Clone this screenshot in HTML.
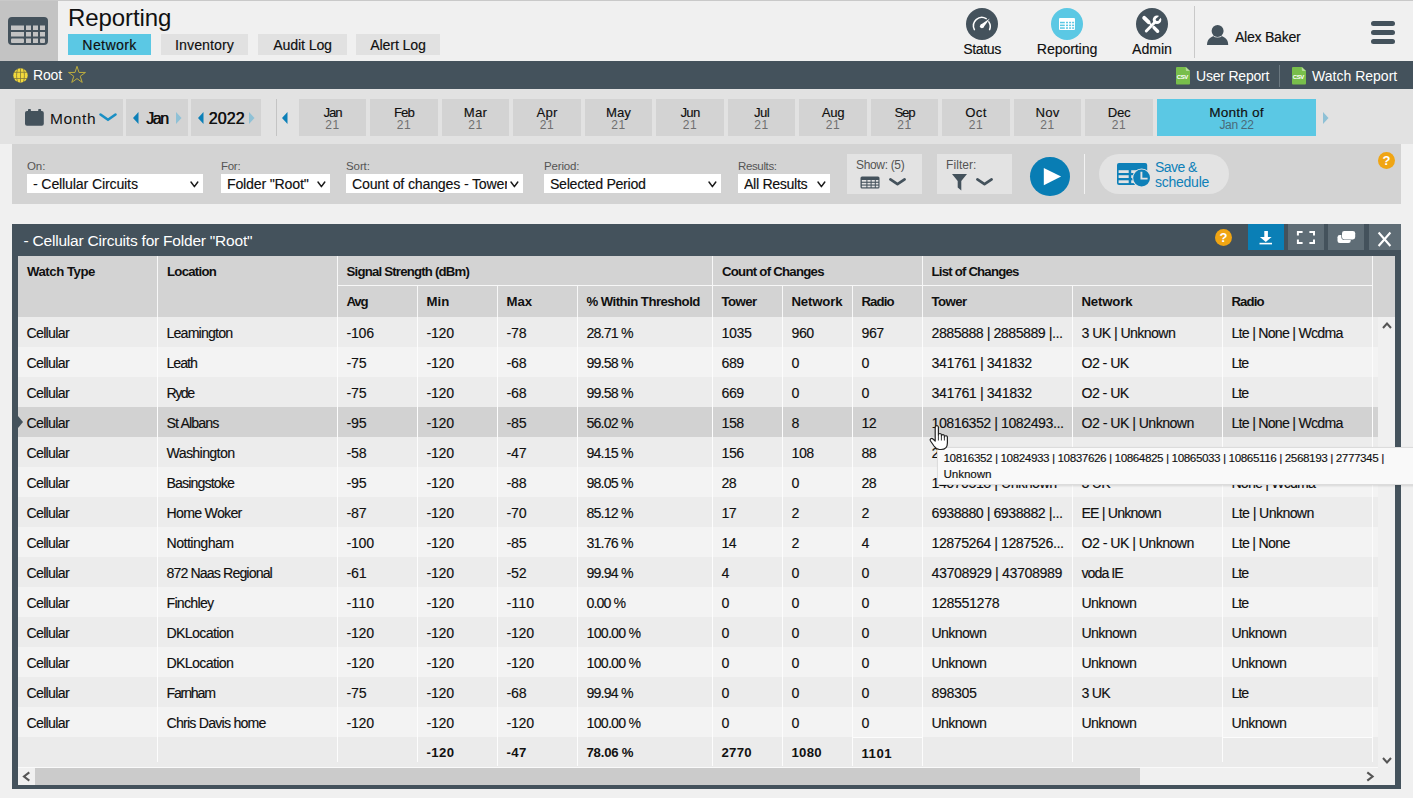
<!DOCTYPE html>
<html><head><meta charset="utf-8"><title>Reporting</title>
<style>
html,body{margin:0;padding:0}
body{width:1413px;height:798px;overflow:hidden;position:relative;background:#f0f0f0;font-family:"Liberation Sans",sans-serif}
.b{position:absolute;box-sizing:border-box}
.t{position:absolute;white-space:nowrap}
svg.b{overflow:visible}
</style></head><body>
<div class="b" style="left:0px;top:0px;width:1413px;height:61px;background:#f0f0f0;"></div>
<div class="b" style="left:0px;top:0px;width:1413px;height:1px;background:#c9c9c9;"></div>
<div class="b" style="left:0px;top:1px;width:58px;height:60px;background:#c3c3c3;"></div>
<svg class="b" style="left:8px;top:17px" width="40" height="28" viewBox="0 0 40 28">
<rect x="0" y="0" width="40" height="28" rx="4" fill="#44525c"/>
<g fill="#c3c3c3">
<rect x="3" y="8.5" width="13" height="4.5"/><rect x="18" y="8.5" width="5" height="4.5"/><rect x="25" y="8.5" width="5" height="4.5"/><rect x="32" y="8.5" width="5" height="4.5"/>
<rect x="3" y="15" width="13" height="4.5"/><rect x="18" y="15" width="5" height="4.5"/><rect x="25" y="15" width="5" height="4.5"/><rect x="32" y="15" width="5" height="4.5"/>
<rect x="3" y="21.5" width="13" height="4.5" rx="1"/><rect x="18" y="21.5" width="5" height="4.5"/><rect x="25" y="21.5" width="5" height="4.5"/><rect x="32" y="21.5" width="5" height="4.5" rx="1"/>
</g></svg>
<div class="t" style="left:68px;top:5.68px;font-size:24px;line-height:24px;color:#111;letter-spacing:-0.085px;">Reporting</div>
<div class="b" style="left:68px;top:34px;width:83px;height:21px;background:#5bc8e4;"></div>
<div class="t" style="left:68px;top:37.65px;font-size:14px;line-height:14px;color:#111;text-shadow:0.5px 0 0 rgba(0,0,0,0.3);letter-spacing:0.422px;width:83px;text-align:center;">Network</div>
<div class="b" style="left:161px;top:34px;width:87px;height:21px;background:#e1e1e1;"></div>
<div class="t" style="left:161px;top:37.65px;font-size:14px;line-height:14px;color:#111;text-shadow:0.5px 0 0 rgba(0,0,0,0.3);letter-spacing:0.158px;width:87px;text-align:center;">Inventory</div>
<div class="b" style="left:258px;top:34px;width:89px;height:21px;background:#e1e1e1;"></div>
<div class="t" style="left:258px;top:37.65px;font-size:14px;line-height:14px;color:#111;text-shadow:0.5px 0 0 rgba(0,0,0,0.3);letter-spacing:-0.047px;width:89px;text-align:center;">Audit Log</div>
<div class="b" style="left:356px;top:34px;width:84px;height:21px;background:#e1e1e1;"></div>
<div class="t" style="left:356px;top:37.65px;font-size:14px;line-height:14px;color:#111;text-shadow:0.5px 0 0 rgba(0,0,0,0.3);letter-spacing:-0.043px;width:84px;text-align:center;">Alert Log</div>
<div class="b" style="left:966px;top:8px;width:32px;height:32px;border-radius:50%;background:#44525c"></div>
<div class="t" style="left:942px;top:42.15px;font-size:14px;line-height:14px;color:#111;text-shadow:0.5px 0 0 rgba(0,0,0,0.3);letter-spacing:-0.328px;width:80px;text-align:center;">Status</div>
<div class="b" style="left:1051px;top:8px;width:32px;height:32px;border-radius:50%;background:#5bc8e4"></div>
<div class="t" style="left:1027px;top:42.15px;font-size:14px;line-height:14px;color:#111;text-shadow:0.5px 0 0 rgba(0,0,0,0.3);letter-spacing:-0.05px;width:80px;text-align:center;">Reporting</div>
<div class="b" style="left:1136px;top:8px;width:32px;height:32px;border-radius:50%;background:#44525c"></div>
<div class="t" style="left:1112px;top:42.15px;font-size:14px;line-height:14px;color:#111;text-shadow:0.5px 0 0 rgba(0,0,0,0.3);letter-spacing:0.045px;width:80px;text-align:center;">Admin</div>
<svg class="b" style="left:966px;top:8px" width="32" height="32" viewBox="0 0 32 32">
<path d="M8.4 21.6 A8.4 8.4 0 0 1 20.2 10.6" fill="none" stroke="#fff" stroke-width="1.5" stroke-linecap="round"/>
<path d="M22.8 13.8 A8.4 8.4 0 0 1 23.6 21.6" fill="none" stroke="#fff" stroke-width="1.5" stroke-linecap="round"/>
<path d="M14.6 16.8 L23.8 10.4 L17.4 19.6 Z" fill="#fff"/><circle cx="15.9" cy="18.2" r="1.95" fill="#fff"/>
</svg>
<svg class="b" style="left:1051px;top:8px" width="32" height="32" viewBox="0 0 32 32">
<rect x="8" y="10" width="16" height="12" rx="1" fill="#fff"/>
<g fill="#5bc8e4"><rect x="9" y="13.8" width="4.8" height="1.5"/><rect x="15" y="13.8" width="2" height="1.5"/><rect x="18.1" y="13.8" width="2" height="1.5"/><rect x="21.1" y="13.8" width="2" height="1.5"/><rect x="9" y="16.6" width="4.8" height="1.5"/><rect x="15" y="16.6" width="2" height="1.5"/><rect x="18.1" y="16.6" width="2" height="1.5"/><rect x="21.1" y="16.6" width="2" height="1.5"/><rect x="9" y="19.3" width="4.8" height="1.5"/><rect x="15" y="19.3" width="2" height="1.5"/><rect x="18.1" y="19.3" width="2" height="1.5"/><rect x="21.1" y="19.3" width="2" height="1.5"/></g>
</svg>
<svg class="b" style="left:1136px;top:8px" width="32" height="32" viewBox="0 0 32 32">
<g stroke="#fff" stroke-linecap="round">
<line x1="8.2" y1="9.8" x2="12.6" y2="14.2" stroke-width="3.9"/>
<line x1="12.6" y1="14.2" x2="15.5" y2="17.1" stroke-width="1.6"/>
<line x1="18" y1="19.6" x2="21.6" y2="23.2" stroke-width="3.4"/>
<line x1="10.3" y1="23" x2="18.6" y2="14.6" stroke-width="2.9"/>
</g>
<circle cx="21" cy="11.8" r="4.3" fill="#fff"/>
<circle cx="21.3" cy="11.5" r="1.6" fill="#44525c"/>
<rect x="-1.3" y="-6.5" width="2.6" height="6.5" transform="translate(21.3,11.5) rotate(45)" fill="#44525c"/>
<line x1="10.3" y1="23" x2="18.6" y2="14.6" stroke="#44525c" stroke-width="0.9" opacity="0"/>
</svg>
<div class="b" style="left:1194px;top:6px;width:1px;height:52px;background:#c9c9c9;"></div>
<svg class="b" style="left:1207px;top:25px" width="22" height="21" viewBox="0 0 22 21">
<path d="M0 19.9 C0 14 4.5 10.6 10.6 10.6 C16.7 10.6 21.2 14 21.2 19.9 Z" fill="#44525c"/>
<circle cx="10.6" cy="5.9" r="6.7" fill="#f0f0f0"/>
<circle cx="10.6" cy="5.9" r="6" fill="#44525c"/>
</svg>
<div class="t" style="left:1235px;top:30.15px;font-size:14px;line-height:14px;color:#111;text-shadow:0.5px 0 0 rgba(0,0,0,0.3);letter-spacing:-0.225px;">Alex Baker</div>
<div class="b" style="left:1371px;top:21px;width:24px;height:5px;border-radius:2.5px;background:#44525c"></div>
<div class="b" style="left:1371px;top:30px;width:24px;height:5px;border-radius:2.5px;background:#44525c"></div>
<div class="b" style="left:1371px;top:39px;width:24px;height:5px;border-radius:2.5px;background:#44525c"></div>
<div class="b" style="left:0px;top:61px;width:1413px;height:28px;background:#44525c;"></div>
<svg class="b" style="left:13px;top:67.6px" width="15" height="15" viewBox="0 0 15 15">
<circle cx="7.5" cy="7.5" r="7.2" fill="#f2d93c"/>
<g stroke="#6f6a3a" stroke-width="0.8" fill="none" opacity="0.85">
<path d="M4.6 1 C3.2 4.5 3.2 10.5 4.6 14"/><path d="M10.4 1 C11.8 4.5 11.8 10.5 10.4 14"/><line x1="7.5" y1="0.3" x2="7.5" y2="14.7"/>
<line x1="0.5" y1="4.3" x2="14.5" y2="4.3"/><line x1="0.5" y1="10.5" x2="14.5" y2="10.5"/>
</g></svg>
<div class="t" style="left:33px;top:67.65px;font-size:14px;line-height:14px;color:#fff;letter-spacing:-0.164px;">Root</div>
<svg class="b" style="left:67px;top:65.6px" width="20" height="19" viewBox="0 0 20 19">
<path d="M10.00 0.30 L12.00 6.45 L18.46 6.45 L13.23 10.25 L15.23 16.40 L10.00 12.60 L4.77 16.40 L6.77 10.25 L1.54 6.45 L8.00 6.45 Z" fill="none" stroke="#bfae3e" stroke-width="1" stroke-linejoin="miter"/>
</svg>
<svg class="b" style="left:1176px;top:66.7px" width="14" height="17.5" viewBox="0 0 14 17.5">
<path d="M1 0 H9.8 L14 4 V16.5 a1 1 0 0 1 -1 1 H1 a1 1 0 0 1 -1 -1 V1 a1 1 0 0 1 1 -1 Z" fill="#78be4b"/>
<path d="M9.8 0 L14 4 H11 a1.2 1.2 0 0 1 -1.2 -1.2 Z" fill="#b5dc98"/>
<text x="6.3" y="12.4" font-size="6" font-family="Liberation Sans" font-weight="700" fill="#fff" text-anchor="middle" letter-spacing="-0.4">CSV</text>
</svg>
<div class="t" style="left:1196px;top:69.15px;font-size:14px;line-height:14px;color:#fff;letter-spacing:-0.209px;">User Report</div>
<div class="b" style="left:1279px;top:65px;width:1px;height:22px;background:#6b7880;"></div>
<svg class="b" style="left:1292px;top:66.7px" width="14" height="17.5" viewBox="0 0 14 17.5">
<path d="M1 0 H9.8 L14 4 V16.5 a1 1 0 0 1 -1 1 H1 a1 1 0 0 1 -1 -1 V1 a1 1 0 0 1 1 -1 Z" fill="#78be4b"/>
<path d="M9.8 0 L14 4 H11 a1.2 1.2 0 0 1 -1.2 -1.2 Z" fill="#b5dc98"/>
<text x="6.3" y="12.4" font-size="6" font-family="Liberation Sans" font-weight="700" fill="#fff" text-anchor="middle" letter-spacing="-0.4">CSV</text>
</svg>
<div class="t" style="left:1312px;top:69.15px;font-size:14px;line-height:14px;color:#fff;letter-spacing:0.014px;">Watch Report</div>
<div class="b" style="left:0px;top:89px;width:1413px;height:55px;background:#e2e2e2;"></div>
<div class="b" style="left:15px;top:99px;width:108px;height:37px;background:#d3d3d3;"></div>
<svg class="b" style="left:25px;top:108.9px" width="20" height="18" viewBox="0 0 20 18">
<rect x="0" y="2.1" width="18.8" height="14.7" rx="2" fill="#44525c"/>
<rect x="3" y="0" width="2.9" height="4" rx="0.8" fill="#44525c"/><rect x="13.2" y="0" width="2.9" height="4" rx="0.8" fill="#44525c"/>
</svg>
<div class="t" style="left:50px;top:111.38px;font-size:15.5px;line-height:15.5px;color:#111;letter-spacing:0.657px;">Month</div>
<svg class="b" style="left:99px;top:113px" width="18" height="9" viewBox="0 0 18 9">
<path d="M1.5 1.5 L9 6.8 L16.5 1.5" fill="none" stroke="#1a8fc4" stroke-width="2.6" stroke-linecap="round" stroke-linejoin="round"/>
</svg>
<div class="b" style="left:126px;top:99px;width:62px;height:37px;background:#d3d3d3;"></div>
<svg class="b" style="left:132.7px;top:112.2px" width="6" height="12" viewBox="0 0 6 12"><path d="M5.5 0 L0 6 L5.5 12 Z" fill="#0c80b8"/></svg>
<div class="t" style="left:146px;top:110.96px;font-size:16px;line-height:16px;color:#111;letter-spacing:-1.413px;text-shadow:0.45px 0 0 #111;">Jan</div>
<svg class="b" style="left:176px;top:112.2px" width="6" height="12" viewBox="0 0 6 12"><path d="M0 0 L5.5 6 L0 12 Z" fill="#8fc1d6"/></svg>
<div class="b" style="left:191px;top:99px;width:70px;height:37px;background:#d3d3d3;"></div>
<svg class="b" style="left:197.8px;top:112.2px" width="6" height="12" viewBox="0 0 6 12"><path d="M5.5 0 L0 6 L5.5 12 Z" fill="#0c80b8"/></svg>
<div class="t" style="left:208.5px;top:110.96px;font-size:16px;line-height:16px;color:#111;letter-spacing:0.116px;text-shadow:0.5px 0 0 #111;">2022</div>
<svg class="b" style="left:248.8px;top:112.2px" width="6" height="12" viewBox="0 0 6 12"><path d="M0 0 L5.5 6 L0 12 Z" fill="#8fc1d6"/></svg>
<div class="b" style="left:276px;top:99px;width:1px;height:37px;background:#c4c4c4;"></div>
<svg class="b" style="left:282px;top:112px" width="6" height="12" viewBox="0 0 6 12"><path d="M5.5 0 L0 6 L5.5 12 Z" fill="#0c80b8"/></svg>
<div class="b" style="left:299px;top:99px;width:67px;height:37px;background:#d3d3d3;"></div>
<div class="t" style="left:299px;top:106.00px;font-size:13px;line-height:13px;color:#111;text-shadow:0.5px 0 0 rgba(0,0,0,0.3);letter-spacing:-1.003px;width:67px;text-align:center;">Jan</div>
<div class="t" style="left:299px;top:118.84px;font-size:12px;line-height:12px;color:#6f6f6f;letter-spacing:0.56px;width:67px;text-align:center;">21</div>
<div class="b" style="left:370px;top:99px;width:68px;height:37px;background:#d3d3d3;"></div>
<div class="t" style="left:370px;top:106.00px;font-size:13px;line-height:13px;color:#111;text-shadow:0.5px 0 0 rgba(0,0,0,0.3);letter-spacing:-0.738px;width:68px;text-align:center;">Feb</div>
<div class="t" style="left:370px;top:118.84px;font-size:12px;line-height:12px;color:#6f6f6f;letter-spacing:0.56px;width:68px;text-align:center;">21</div>
<div class="b" style="left:442px;top:99px;width:67px;height:37px;background:#d3d3d3;"></div>
<div class="t" style="left:442px;top:106.00px;font-size:13px;line-height:13px;color:#111;text-shadow:0.5px 0 0 rgba(0,0,0,0.3);letter-spacing:0.354px;width:67px;text-align:center;">Mar</div>
<div class="t" style="left:442px;top:118.84px;font-size:12px;line-height:12px;color:#6f6f6f;letter-spacing:0.56px;width:67px;text-align:center;">21</div>
<div class="b" style="left:513px;top:99px;width:68px;height:37px;background:#d3d3d3;"></div>
<div class="t" style="left:513px;top:106.00px;font-size:13px;line-height:13px;color:#111;text-shadow:0.5px 0 0 rgba(0,0,0,0.3);letter-spacing:0.276px;width:68px;text-align:center;">Apr</div>
<div class="t" style="left:513px;top:118.84px;font-size:12px;line-height:12px;color:#6f6f6f;letter-spacing:0.56px;width:68px;text-align:center;">21</div>
<div class="b" style="left:585px;top:99px;width:67px;height:37px;background:#d3d3d3;"></div>
<div class="t" style="left:585px;top:106.00px;font-size:13px;line-height:13px;color:#111;text-shadow:0.5px 0 0 rgba(0,0,0,0.3);letter-spacing:0.174px;width:67px;text-align:center;">May</div>
<div class="t" style="left:585px;top:118.84px;font-size:12px;line-height:12px;color:#6f6f6f;letter-spacing:0.56px;width:67px;text-align:center;">21</div>
<div class="b" style="left:656px;top:99px;width:68px;height:37px;background:#d3d3d3;"></div>
<div class="t" style="left:656px;top:106.00px;font-size:13px;line-height:13px;color:#111;text-shadow:0.5px 0 0 rgba(0,0,0,0.3);letter-spacing:-0.573px;width:68px;text-align:center;">Jun</div>
<div class="t" style="left:656px;top:118.84px;font-size:12px;line-height:12px;color:#6f6f6f;letter-spacing:0.56px;width:68px;text-align:center;">21</div>
<div class="b" style="left:728px;top:99px;width:67px;height:37px;background:#d3d3d3;"></div>
<div class="t" style="left:728px;top:106.00px;font-size:13px;line-height:13px;color:#111;text-shadow:0.5px 0 0 rgba(0,0,0,0.3);letter-spacing:-0.496px;width:67px;text-align:center;">Jul</div>
<div class="t" style="left:728px;top:118.84px;font-size:12px;line-height:12px;color:#6f6f6f;letter-spacing:0.56px;width:67px;text-align:center;">21</div>
<div class="b" style="left:799px;top:99px;width:68px;height:37px;background:#d3d3d3;"></div>
<div class="t" style="left:799px;top:106.00px;font-size:13px;line-height:13px;color:#111;text-shadow:0.5px 0 0 rgba(0,0,0,0.3);letter-spacing:-0.237px;width:68px;text-align:center;">Aug</div>
<div class="t" style="left:799px;top:118.84px;font-size:12px;line-height:12px;color:#6f6f6f;letter-spacing:0.56px;width:68px;text-align:center;">21</div>
<div class="b" style="left:871px;top:99px;width:67px;height:37px;background:#d3d3d3;"></div>
<div class="t" style="left:871px;top:106.00px;font-size:13px;line-height:13px;color:#111;text-shadow:0.5px 0 0 rgba(0,0,0,0.3);letter-spacing:-0.987px;width:67px;text-align:center;">Sep</div>
<div class="t" style="left:871px;top:118.84px;font-size:12px;line-height:12px;color:#6f6f6f;letter-spacing:0.56px;width:67px;text-align:center;">21</div>
<div class="b" style="left:942px;top:99px;width:68px;height:37px;background:#d3d3d3;"></div>
<div class="t" style="left:942px;top:106.00px;font-size:13px;line-height:13px;color:#111;text-shadow:0.5px 0 0 rgba(0,0,0,0.3);letter-spacing:0.482px;width:68px;text-align:center;">Oct</div>
<div class="t" style="left:942px;top:118.84px;font-size:12px;line-height:12px;color:#6f6f6f;letter-spacing:0.56px;width:68px;text-align:center;">21</div>
<div class="b" style="left:1014px;top:99px;width:67px;height:37px;background:#d3d3d3;"></div>
<div class="t" style="left:1014px;top:106.00px;font-size:13px;line-height:13px;color:#111;text-shadow:0.5px 0 0 rgba(0,0,0,0.3);letter-spacing:0.246px;width:67px;text-align:center;">Nov</div>
<div class="t" style="left:1014px;top:118.84px;font-size:12px;line-height:12px;color:#6f6f6f;letter-spacing:0.56px;width:67px;text-align:center;">21</div>
<div class="b" style="left:1085px;top:99px;width:68px;height:37px;background:#d3d3d3;"></div>
<div class="t" style="left:1085px;top:106.00px;font-size:13px;line-height:13px;color:#111;text-shadow:0.5px 0 0 rgba(0,0,0,0.3);letter-spacing:-0.129px;width:68px;text-align:center;">Dec</div>
<div class="t" style="left:1085px;top:118.84px;font-size:12px;line-height:12px;color:#6f6f6f;letter-spacing:0.56px;width:68px;text-align:center;">21</div>
<div class="b" style="left:1157px;top:99px;width:159px;height:37px;background:#5bc8e4;"></div>
<div class="t" style="left:1157px;top:105.57px;font-size:13.5px;line-height:13.5px;color:#111;text-shadow:0.5px 0 0 rgba(0,0,0,0.3);letter-spacing:0.244px;width:159px;text-align:center;">Month of</div>
<div class="t" style="left:1157px;top:118.84px;font-size:12px;line-height:12px;color:#4a6a78;letter-spacing:-0.308px;width:159px;text-align:center;">Jan 22</div>
<svg class="b" style="left:1323px;top:112.2px" width="6" height="12" viewBox="0 0 6 12"><path d="M0 0 L5.5 6 L0 12 Z" fill="#8fc1d6"/></svg>
<div class="b" style="left:12px;top:144px;width:1389px;height:60px;background:#d3d3d3;"></div>
<div class="t" style="left:27px;top:160.77px;font-size:11.5px;line-height:11.5px;color:#555;letter-spacing:-0.072px;">On:</div>
<div class="b" style="left:27px;top:174px;width:176px;height:19px;background:#fff;"></div>
<div class="t" style="left:33px;top:177.15px;font-size:14px;line-height:14px;color:#111;text-shadow:0.5px 0 0 rgba(0,0,0,0.3);letter-spacing:-0.093px;width:154px;clip-path:inset(-6px 0 -6px 0);">- Cellular Circuits</div>
<svg class="b" style="left:189.8px;top:180.6px" width="8.8" height="6.6" viewBox="0 0 8.8 6.6"><path d="M1 1 L4.4 5.6 L7.800000000000001 1" fill="none" stroke="#1a1a1a" stroke-width="1.5" stroke-linecap="round" stroke-linejoin="round"/></svg>
<div class="t" style="left:221px;top:160.77px;font-size:11.5px;line-height:11.5px;color:#555;letter-spacing:-0.288px;">For:</div>
<div class="b" style="left:221px;top:174px;width:109px;height:19px;background:#fff;"></div>
<div class="t" style="left:227px;top:177.15px;font-size:14px;line-height:14px;color:#111;text-shadow:0.5px 0 0 rgba(0,0,0,0.3);letter-spacing:-0.122px;width:87px;clip-path:inset(-6px 0 -6px 0);">Folder "Root"</div>
<svg class="b" style="left:316.8px;top:180.6px" width="8.8" height="6.6" viewBox="0 0 8.8 6.6"><path d="M1 1 L4.4 5.6 L7.800000000000001 1" fill="none" stroke="#1a1a1a" stroke-width="1.5" stroke-linecap="round" stroke-linejoin="round"/></svg>
<div class="t" style="left:346px;top:160.77px;font-size:11.5px;line-height:11.5px;color:#555;letter-spacing:-0.095px;">Sort:</div>
<div class="b" style="left:346px;top:174px;width:177px;height:19px;background:#fff;"></div>
<div class="t" style="left:352px;top:177.15px;font-size:14px;line-height:14px;color:#111;text-shadow:0.5px 0 0 rgba(0,0,0,0.3);letter-spacing:-0.103px;width:155px;clip-path:inset(-6px 0 -6px 0);">Count of changes - Tower</div>
<svg class="b" style="left:509.8px;top:180.6px" width="8.8" height="6.6" viewBox="0 0 8.8 6.6"><path d="M1 1 L4.4 5.6 L7.800000000000001 1" fill="none" stroke="#1a1a1a" stroke-width="1.5" stroke-linecap="round" stroke-linejoin="round"/></svg>
<div class="t" style="left:544px;top:160.77px;font-size:11.5px;line-height:11.5px;color:#555;letter-spacing:-0.164px;">Period:</div>
<div class="b" style="left:544px;top:174px;width:177px;height:19px;background:#fff;"></div>
<div class="t" style="left:550px;top:177.15px;font-size:14px;line-height:14px;color:#111;text-shadow:0.5px 0 0 rgba(0,0,0,0.3);letter-spacing:-0.219px;width:155px;clip-path:inset(-6px 0 -6px 0);">Selected Period</div>
<svg class="b" style="left:707.8px;top:180.6px" width="8.8" height="6.6" viewBox="0 0 8.8 6.6"><path d="M1 1 L4.4 5.6 L7.800000000000001 1" fill="none" stroke="#1a1a1a" stroke-width="1.5" stroke-linecap="round" stroke-linejoin="round"/></svg>
<div class="t" style="left:738px;top:160.77px;font-size:11.5px;line-height:11.5px;color:#555;letter-spacing:-0.363px;">Results:</div>
<div class="b" style="left:738px;top:174px;width:92px;height:19px;background:#fff;"></div>
<div class="t" style="left:744px;top:177.15px;font-size:14px;line-height:14px;color:#111;text-shadow:0.5px 0 0 rgba(0,0,0,0.3);letter-spacing:-0.255px;width:70px;clip-path:inset(-6px 0 -6px 0);">All Results</div>
<svg class="b" style="left:816.8px;top:180.6px" width="8.8" height="6.6" viewBox="0 0 8.8 6.6"><path d="M1 1 L4.4 5.6 L7.800000000000001 1" fill="none" stroke="#1a1a1a" stroke-width="1.5" stroke-linecap="round" stroke-linejoin="round"/></svg>
<div class="b" style="left:847px;top:154px;width:75px;height:40px;background:#e3e3e3;"></div>
<div class="t" style="left:856px;top:159.04px;font-size:12px;line-height:12px;color:#555;letter-spacing:-0.335px;">Show: (5)</div>
<svg class="b" style="left:860px;top:176px" width="20" height="13" viewBox="0 0 20 13">
<rect x="0.5" y="0.5" width="19" height="12" rx="1.5" fill="#44525c"/>
<g fill="#e3e3e3"><rect x="1.8" y="4" width="4.6" height="1.7"/><rect x="7.4" y="4" width="3.2" height="1.7"/><rect x="11.6" y="4" width="3.2" height="1.7"/><rect x="15.8" y="4" width="2.6" height="1.7"/>
<rect x="1.8" y="6.8" width="4.6" height="1.7"/><rect x="7.4" y="6.8" width="3.2" height="1.7"/><rect x="11.6" y="6.8" width="3.2" height="1.7"/><rect x="15.8" y="6.8" width="2.6" height="1.7"/>
<rect x="1.8" y="9.6" width="4.6" height="1.7"/><rect x="7.4" y="9.6" width="3.2" height="1.7"/><rect x="11.6" y="9.6" width="3.2" height="1.7"/><rect x="15.8" y="9.6" width="2.6" height="1.7"/></g>
</svg>
<svg class="b" style="left:889px;top:178.3px" width="17" height="8" viewBox="0 0 17 8"><path d="M1.4 1.4 L8.5 6.2 L15.6 1.4" fill="none" stroke="#44525c" stroke-width="2.7" stroke-linecap="round" stroke-linejoin="round"/></svg>
<div class="b" style="left:937px;top:154px;width:75px;height:40px;background:#e3e3e3;"></div>
<div class="t" style="left:946px;top:159.04px;font-size:12px;line-height:12px;color:#555;letter-spacing:0.073px;">Filter:</div>
<svg class="b" style="left:952px;top:174px" width="15" height="17" viewBox="0 0 15 17">
<path d="M0 0 H15 L9.3 7 V16.5 L5.7 13.5 V7 Z" fill="#44525c"/>
</svg>
<svg class="b" style="left:976px;top:178.3px" width="17" height="8" viewBox="0 0 17 8"><path d="M1.4 1.4 L8.5 6.2 L15.6 1.4" fill="none" stroke="#44525c" stroke-width="2.7" stroke-linecap="round" stroke-linejoin="round"/></svg>
<div class="b" style="left:1030px;top:156.7px;width:40px;height:39.4px;border-radius:50%;background:#087db4"></div>
<svg class="b" style="left:1030px;top:157px" width="40" height="40" viewBox="0 0 40 40"><path d="M13.8 11 L31.1 19.6 L13.8 28.2 Z" fill="#fff"/></svg>
<div class="b" style="left:1084px;top:154px;width:1px;height:40px;background:#f2f2f2;"></div>
<div class="b" style="left:1099px;top:154px;width:130px;height:40px;border-radius:20px;background:#e3e3e3"></div>
<svg class="b" style="left:1116.8px;top:163px" width="35" height="26" viewBox="0 0 35 26">
<rect x="0" y="0" width="30.2" height="21.9" rx="2" fill="#0e80b8"/>
<g fill="#e3e3e3"><rect x="1.6" y="7.2" width="10.1" height="2.8"/><rect x="1.6" y="12.2" width="10.1" height="2.8"/><rect x="1.6" y="17.3" width="10.1" height="2.8"/>
<rect x="14.2" y="7.2" width="12" height="2.8"/><rect x="14.2" y="12.2" width="6" height="2.8"/><rect x="14.2" y="17.3" width="6" height="2.8"/></g>
<circle cx="24.6" cy="15" r="9.4" fill="#e3e3e3"/><circle cx="24.6" cy="15" r="8.4" fill="#0e80b8"/>
<path d="M24.4 8.8 V15.6 H30.6" fill="none" stroke="#e3e3e3" stroke-width="1.9"/>
</svg>
<div class="t" style="left:1155px;top:160.15px;font-size:14px;line-height:14px;color:#0e80b8;letter-spacing:-0.574px;">Save &amp;</div>
<div class="t" style="left:1155px;top:174.65px;font-size:14px;line-height:14px;color:#0e80b8;letter-spacing:-0.249px;">schedule</div>
<div class="b" style="left:1378.0px;top:152.0px;width:17px;height:17px;border-radius:50%;background:#f0a513;color:#fff;font-size:13px;line-height:17px;text-align:center;font-weight:700">?</div>
<div class="b" style="left:12px;top:224px;width:1389px;height:565px;background:#44525c;"></div>
<div class="t" style="left:23.5px;top:232.88px;font-size:15.5px;line-height:15.5px;color:#fff;letter-spacing:-0.213px;">- Cellular Circuits for Folder "Root"</div>
<div class="b" style="left:1215.0px;top:228.8px;width:17px;height:17px;border-radius:50%;background:#f0a513;color:#fff;font-size:13px;line-height:17px;text-align:center;font-weight:700">?</div>
<div class="b" style="left:1248px;top:224px;width:36px;height:26px;background:#0a7fb6;"></div>
<svg class="b" style="left:1248px;top:224px" width="36" height="26" viewBox="0 0 36 26">
<path d="M16.3 7 H19.9 V13 H23.6 L17.8 18 L11.9 13 H16.3 Z" fill="#fff"/><rect x="11.5" y="18.8" width="12.5" height="1.6" fill="#fff"/>
</svg>
<div class="b" style="left:1288px;top:224px;width:36px;height:26px;background:#5f6d76;"></div>
<svg class="b" style="left:1288px;top:224px" width="36" height="26" viewBox="0 0 36 26">
<path d="M9.9 11.5 V8 H14.6 M21.4 8 H26 V11.5 M26 15.5 V19 H21.4 M14.6 19 H9.9 V15.5" fill="none" stroke="#fff" stroke-width="2"/>
</svg>
<div class="b" style="left:1328px;top:224px;width:36px;height:26px;background:#5f6d76;"></div>
<svg class="b" style="left:1328px;top:224px" width="36" height="26" viewBox="0 0 36 26">
<rect x="9.5" y="11" width="13.2" height="8" rx="2.3" fill="#fff"/>
<rect x="13.3" y="6.3" width="14.5" height="9.6" rx="2.8" fill="#5f6d76"/>
<rect x="14" y="7" width="13.2" height="8.4" rx="2.3" fill="#fff"/>
</svg>
<div class="b" style="left:1369px;top:224px;width:32px;height:26px;background:#5f6d76;"></div>
<svg class="b" style="left:1369px;top:224px" width="32" height="26" viewBox="0 0 32 26">
<path d="M9.6 8.5 L21.4 22 M21.4 8.5 L9.6 22" stroke="#fff" stroke-width="2.1" fill="none"/>
</svg>
<div class="b" style="left:18px;top:256px;width:1377px;height:529px;background:#efefef;"></div>
<div class="b" style="left:18px;top:256px;width:1377px;height:61px;background:#d3d3d3;"></div>
<div class="b" style="left:157px;top:256px;width:1px;height:61px;background:#f7f7f7;"></div>
<div class="b" style="left:337px;top:256px;width:1px;height:61px;background:#f7f7f7;"></div>
<div class="b" style="left:712px;top:256px;width:1px;height:61px;background:#f7f7f7;"></div>
<div class="b" style="left:922px;top:256px;width:1px;height:61px;background:#f7f7f7;"></div>
<div class="b" style="left:1372px;top:256px;width:1px;height:61px;background:#f7f7f7;"></div>
<div class="b" style="left:417px;top:285px;width:1px;height:32px;background:#f7f7f7;"></div>
<div class="b" style="left:497px;top:285px;width:1px;height:32px;background:#f7f7f7;"></div>
<div class="b" style="left:577px;top:285px;width:1px;height:32px;background:#f7f7f7;"></div>
<div class="b" style="left:782px;top:285px;width:1px;height:32px;background:#f7f7f7;"></div>
<div class="b" style="left:852px;top:285px;width:1px;height:32px;background:#f7f7f7;"></div>
<div class="b" style="left:1072px;top:285px;width:1px;height:32px;background:#f7f7f7;"></div>
<div class="b" style="left:1222px;top:285px;width:1px;height:32px;background:#f7f7f7;"></div>
<div class="b" style="left:338px;top:285px;width:1034px;height:1px;background:#f7f7f7;"></div>
<div class="t" style="left:27px;top:264.83px;font-size:13.2px;line-height:13.2px;color:#111;font-weight:700;letter-spacing:-0.466px;">Watch Type</div>
<div class="t" style="left:167px;top:264.83px;font-size:13.2px;line-height:13.2px;color:#111;font-weight:700;letter-spacing:-0.742px;">Location</div>
<div class="t" style="left:346.5px;top:264.83px;font-size:13.2px;line-height:13.2px;color:#111;font-weight:700;letter-spacing:-0.79px;">Signal Strength (dBm)</div>
<div class="t" style="left:722px;top:264.83px;font-size:13.2px;line-height:13.2px;color:#111;font-weight:700;letter-spacing:-0.736px;">Count of Changes</div>
<div class="t" style="left:931.5px;top:264.83px;font-size:13.2px;line-height:13.2px;color:#111;font-weight:700;letter-spacing:-0.793px;">List of Changes</div>
<div class="t" style="left:346.5px;top:294.83px;font-size:13.2px;line-height:13.2px;color:#111;font-weight:700;letter-spacing:-1.208px;">Avg</div>
<div class="t" style="left:426.5px;top:294.83px;font-size:13.2px;line-height:13.2px;color:#111;font-weight:700;letter-spacing:0.044px;">Min</div>
<div class="t" style="left:506.5px;top:294.83px;font-size:13.2px;line-height:13.2px;color:#111;font-weight:700;letter-spacing:-0.096px;">Max</div>
<div class="t" style="left:586.5px;top:294.83px;font-size:13.2px;line-height:13.2px;color:#111;font-weight:700;letter-spacing:-0.538px;">% Within Threshold</div>
<div class="t" style="left:721.5px;top:294.83px;font-size:13.2px;line-height:13.2px;color:#111;font-weight:700;letter-spacing:-0.547px;">Tower</div>
<div class="t" style="left:791.5px;top:294.83px;font-size:13.2px;line-height:13.2px;color:#111;font-weight:700;letter-spacing:-0.159px;">Network</div>
<div class="t" style="left:861.5px;top:294.83px;font-size:13.2px;line-height:13.2px;color:#111;font-weight:700;letter-spacing:-0.92px;">Radio</div>
<div class="t" style="left:931.5px;top:294.83px;font-size:13.2px;line-height:13.2px;color:#111;font-weight:700;letter-spacing:-0.547px;">Tower</div>
<div class="t" style="left:1081.5px;top:294.83px;font-size:13.2px;line-height:13.2px;color:#111;font-weight:700;letter-spacing:-0.159px;">Network</div>
<div class="t" style="left:1231.5px;top:294.83px;font-size:13.2px;line-height:13.2px;color:#111;font-weight:700;letter-spacing:-0.92px;">Radio</div>
<div class="b" style="left:1373px;top:317px;width:22px;height:450px;background:#f0f0f0;"></div>
<div class="b" style="left:18px;top:317px;width:1360px;height:30px;background:#ececec;"></div>
<div class="t" style="left:26.5px;top:325.75px;font-size:14px;line-height:14px;color:#111;text-shadow:0.5px 0 0 rgba(0,0,0,0.3);letter-spacing:-0.628px;">Cellular</div>
<div class="t" style="left:166.5px;top:325.75px;font-size:14px;line-height:14px;color:#111;text-shadow:0.5px 0 0 rgba(0,0,0,0.3);letter-spacing:-0.728px;">Leamington</div>
<div class="t" style="left:346.5px;top:325.75px;font-size:14px;line-height:14px;color:#111;text-shadow:0.5px 0 0 rgba(0,0,0,0.3);letter-spacing:-0.183px;">-106</div>
<div class="t" style="left:426.5px;top:325.75px;font-size:14px;line-height:14px;color:#111;text-shadow:0.5px 0 0 rgba(0,0,0,0.3);letter-spacing:-0.183px;">-120</div>
<div class="t" style="left:506.5px;top:325.75px;font-size:14px;line-height:14px;color:#111;text-shadow:0.5px 0 0 rgba(0,0,0,0.3);letter-spacing:-0.155px;">-78</div>
<div class="t" style="left:586.5px;top:325.75px;font-size:14px;line-height:14px;color:#111;text-shadow:0.5px 0 0 rgba(0,0,0,0.3);letter-spacing:-0.728px;">28.71 %</div>
<div class="t" style="left:721.5px;top:325.75px;font-size:14px;line-height:14px;color:#111;text-shadow:0.5px 0 0 rgba(0,0,0,0.3);letter-spacing:-0.318px;">1035</div>
<div class="t" style="left:791.5px;top:325.75px;font-size:14px;line-height:14px;color:#111;text-shadow:0.5px 0 0 rgba(0,0,0,0.3);letter-spacing:-0.358px;">960</div>
<div class="t" style="left:861.5px;top:325.75px;font-size:14px;line-height:14px;color:#111;text-shadow:0.5px 0 0 rgba(0,0,0,0.3);letter-spacing:-0.358px;">967</div>
<div class="t" style="left:931.5px;top:325.75px;font-size:14px;line-height:14px;color:#111;text-shadow:0.5px 0 0 rgba(0,0,0,0.3);letter-spacing:-0.394px;">2885888 | 2885889 |...</div>
<div class="t" style="left:1081.5px;top:325.75px;font-size:14px;line-height:14px;color:#111;text-shadow:0.5px 0 0 rgba(0,0,0,0.3);letter-spacing:-0.517px;">3 UK | Unknown</div>
<div class="t" style="left:1231.5px;top:325.75px;font-size:14px;line-height:14px;color:#111;text-shadow:0.5px 0 0 rgba(0,0,0,0.3);letter-spacing:-0.677px;">Lte | None | Wcdma</div>
<div class="b" style="left:18px;top:347px;width:1360px;height:30px;background:#f3f3f3;"></div>
<div class="t" style="left:26.5px;top:355.75px;font-size:14px;line-height:14px;color:#111;text-shadow:0.5px 0 0 rgba(0,0,0,0.3);letter-spacing:-0.628px;">Cellular</div>
<div class="t" style="left:166.5px;top:355.75px;font-size:14px;line-height:14px;color:#111;text-shadow:0.5px 0 0 rgba(0,0,0,0.3);letter-spacing:-0.918px;">Leath</div>
<div class="t" style="left:346.5px;top:355.75px;font-size:14px;line-height:14px;color:#111;text-shadow:0.5px 0 0 rgba(0,0,0,0.3);letter-spacing:-0.155px;">-75</div>
<div class="t" style="left:426.5px;top:355.75px;font-size:14px;line-height:14px;color:#111;text-shadow:0.5px 0 0 rgba(0,0,0,0.3);letter-spacing:-0.183px;">-120</div>
<div class="t" style="left:506.5px;top:355.75px;font-size:14px;line-height:14px;color:#111;text-shadow:0.5px 0 0 rgba(0,0,0,0.3);letter-spacing:-0.155px;">-68</div>
<div class="t" style="left:586.5px;top:355.75px;font-size:14px;line-height:14px;color:#111;text-shadow:0.5px 0 0 rgba(0,0,0,0.3);letter-spacing:-0.728px;">99.58 %</div>
<div class="t" style="left:721.5px;top:355.75px;font-size:14px;line-height:14px;color:#111;text-shadow:0.5px 0 0 rgba(0,0,0,0.3);letter-spacing:-0.358px;">689</div>
<div class="t" style="left:791.5px;top:355.75px;font-size:14px;line-height:14px;color:#111;text-shadow:0.5px 0 0 rgba(0,0,0,0.3);letter-spacing:-0.238px;">0</div>
<div class="t" style="left:861.5px;top:355.75px;font-size:14px;line-height:14px;color:#111;text-shadow:0.5px 0 0 rgba(0,0,0,0.3);letter-spacing:-0.238px;">0</div>
<div class="t" style="left:931.5px;top:355.75px;font-size:14px;line-height:14px;color:#111;text-shadow:0.5px 0 0 rgba(0,0,0,0.3);letter-spacing:-0.312px;">341761 | 341832</div>
<div class="t" style="left:1081.5px;top:355.75px;font-size:14px;line-height:14px;color:#111;text-shadow:0.5px 0 0 rgba(0,0,0,0.3);letter-spacing:-0.492px;">O2 - UK</div>
<div class="t" style="left:1231.5px;top:355.75px;font-size:14px;line-height:14px;color:#111;text-shadow:0.5px 0 0 rgba(0,0,0,0.3);letter-spacing:-0.941px;">Lte</div>
<div class="b" style="left:18px;top:377px;width:1360px;height:30px;background:#ececec;"></div>
<div class="t" style="left:26.5px;top:385.75px;font-size:14px;line-height:14px;color:#111;text-shadow:0.5px 0 0 rgba(0,0,0,0.3);letter-spacing:-0.628px;">Cellular</div>
<div class="t" style="left:166.5px;top:385.75px;font-size:14px;line-height:14px;color:#111;text-shadow:0.5px 0 0 rgba(0,0,0,0.3);letter-spacing:-1.368px;">Ryde</div>
<div class="t" style="left:346.5px;top:385.75px;font-size:14px;line-height:14px;color:#111;text-shadow:0.5px 0 0 rgba(0,0,0,0.3);letter-spacing:-0.155px;">-75</div>
<div class="t" style="left:426.5px;top:385.75px;font-size:14px;line-height:14px;color:#111;text-shadow:0.5px 0 0 rgba(0,0,0,0.3);letter-spacing:-0.183px;">-120</div>
<div class="t" style="left:506.5px;top:385.75px;font-size:14px;line-height:14px;color:#111;text-shadow:0.5px 0 0 rgba(0,0,0,0.3);letter-spacing:-0.155px;">-68</div>
<div class="t" style="left:586.5px;top:385.75px;font-size:14px;line-height:14px;color:#111;text-shadow:0.5px 0 0 rgba(0,0,0,0.3);letter-spacing:-0.728px;">99.58 %</div>
<div class="t" style="left:721.5px;top:385.75px;font-size:14px;line-height:14px;color:#111;text-shadow:0.5px 0 0 rgba(0,0,0,0.3);letter-spacing:-0.358px;">669</div>
<div class="t" style="left:791.5px;top:385.75px;font-size:14px;line-height:14px;color:#111;text-shadow:0.5px 0 0 rgba(0,0,0,0.3);letter-spacing:-0.238px;">0</div>
<div class="t" style="left:861.5px;top:385.75px;font-size:14px;line-height:14px;color:#111;text-shadow:0.5px 0 0 rgba(0,0,0,0.3);letter-spacing:-0.238px;">0</div>
<div class="t" style="left:931.5px;top:385.75px;font-size:14px;line-height:14px;color:#111;text-shadow:0.5px 0 0 rgba(0,0,0,0.3);letter-spacing:-0.312px;">341761 | 341832</div>
<div class="t" style="left:1081.5px;top:385.75px;font-size:14px;line-height:14px;color:#111;text-shadow:0.5px 0 0 rgba(0,0,0,0.3);letter-spacing:-0.492px;">O2 - UK</div>
<div class="t" style="left:1231.5px;top:385.75px;font-size:14px;line-height:14px;color:#111;text-shadow:0.5px 0 0 rgba(0,0,0,0.3);letter-spacing:-0.941px;">Lte</div>
<div class="b" style="left:18px;top:407px;width:1360px;height:30px;background:#d2d2d2;"></div>
<div class="t" style="left:26.5px;top:415.75px;font-size:14px;line-height:14px;color:#111;text-shadow:0.5px 0 0 rgba(0,0,0,0.3);letter-spacing:-0.628px;">Cellular</div>
<div class="t" style="left:166.5px;top:415.75px;font-size:14px;line-height:14px;color:#111;text-shadow:0.5px 0 0 rgba(0,0,0,0.3);letter-spacing:-0.8px;">St Albans</div>
<div class="t" style="left:346.5px;top:415.75px;font-size:14px;line-height:14px;color:#111;text-shadow:0.5px 0 0 rgba(0,0,0,0.3);letter-spacing:-0.155px;">-95</div>
<div class="t" style="left:426.5px;top:415.75px;font-size:14px;line-height:14px;color:#111;text-shadow:0.5px 0 0 rgba(0,0,0,0.3);letter-spacing:-0.183px;">-120</div>
<div class="t" style="left:506.5px;top:415.75px;font-size:14px;line-height:14px;color:#111;text-shadow:0.5px 0 0 rgba(0,0,0,0.3);letter-spacing:-0.155px;">-85</div>
<div class="t" style="left:586.5px;top:415.75px;font-size:14px;line-height:14px;color:#111;text-shadow:0.5px 0 0 rgba(0,0,0,0.3);letter-spacing:-0.728px;">56.02 %</div>
<div class="t" style="left:721.5px;top:415.75px;font-size:14px;line-height:14px;color:#111;text-shadow:0.5px 0 0 rgba(0,0,0,0.3);letter-spacing:-0.358px;">158</div>
<div class="t" style="left:791.5px;top:415.75px;font-size:14px;line-height:14px;color:#111;text-shadow:0.5px 0 0 rgba(0,0,0,0.3);letter-spacing:-0.238px;">8</div>
<div class="t" style="left:861.5px;top:415.75px;font-size:14px;line-height:14px;color:#111;text-shadow:0.5px 0 0 rgba(0,0,0,0.3);letter-spacing:-0.477px;">12</div>
<div class="t" style="left:931.5px;top:415.75px;font-size:14px;line-height:14px;color:#111;text-shadow:0.5px 0 0 rgba(0,0,0,0.3);letter-spacing:-0.378px;">10816352 | 1082493...</div>
<div class="t" style="left:1081.5px;top:415.75px;font-size:14px;line-height:14px;color:#111;text-shadow:0.5px 0 0 rgba(0,0,0,0.3);letter-spacing:-0.475px;">O2 - UK | Unknown</div>
<div class="t" style="left:1231.5px;top:415.75px;font-size:14px;line-height:14px;color:#111;text-shadow:0.5px 0 0 rgba(0,0,0,0.3);letter-spacing:-0.677px;">Lte | None | Wcdma</div>
<div class="b" style="left:18px;top:437px;width:1360px;height:30px;background:#ececec;"></div>
<div class="t" style="left:26.5px;top:445.75px;font-size:14px;line-height:14px;color:#111;text-shadow:0.5px 0 0 rgba(0,0,0,0.3);letter-spacing:-0.628px;">Cellular</div>
<div class="t" style="left:166.5px;top:445.75px;font-size:14px;line-height:14px;color:#111;text-shadow:0.5px 0 0 rgba(0,0,0,0.3);letter-spacing:-0.549px;">Washington</div>
<div class="t" style="left:346.5px;top:445.75px;font-size:14px;line-height:14px;color:#111;text-shadow:0.5px 0 0 rgba(0,0,0,0.3);letter-spacing:-0.155px;">-58</div>
<div class="t" style="left:426.5px;top:445.75px;font-size:14px;line-height:14px;color:#111;text-shadow:0.5px 0 0 rgba(0,0,0,0.3);letter-spacing:-0.183px;">-120</div>
<div class="t" style="left:506.5px;top:445.75px;font-size:14px;line-height:14px;color:#111;text-shadow:0.5px 0 0 rgba(0,0,0,0.3);letter-spacing:-0.155px;">-47</div>
<div class="t" style="left:586.5px;top:445.75px;font-size:14px;line-height:14px;color:#111;text-shadow:0.5px 0 0 rgba(0,0,0,0.3);letter-spacing:-0.728px;">94.15 %</div>
<div class="t" style="left:721.5px;top:445.75px;font-size:14px;line-height:14px;color:#111;text-shadow:0.5px 0 0 rgba(0,0,0,0.3);letter-spacing:-0.358px;">156</div>
<div class="t" style="left:791.5px;top:445.75px;font-size:14px;line-height:14px;color:#111;text-shadow:0.5px 0 0 rgba(0,0,0,0.3);letter-spacing:-0.358px;">108</div>
<div class="t" style="left:861.5px;top:445.75px;font-size:14px;line-height:14px;color:#111;text-shadow:0.5px 0 0 rgba(0,0,0,0.3);letter-spacing:-0.477px;">88</div>
<div class="t" style="left:931.5px;top:445.75px;font-size:14px;line-height:14px;color:#111;text-shadow:0.5px 0 0 rgba(0,0,0,0.3);letter-spacing:-0.394px;">2878560 | 2878561 |...</div>
<div class="t" style="left:1081.5px;top:445.75px;font-size:14px;line-height:14px;color:#111;text-shadow:0.5px 0 0 rgba(0,0,0,0.3);letter-spacing:-0.517px;">3 UK | Unknown</div>
<div class="t" style="left:1231.5px;top:445.75px;font-size:14px;line-height:14px;color:#111;text-shadow:0.5px 0 0 rgba(0,0,0,0.3);letter-spacing:-0.677px;">Lte | None | Wcdma</div>
<div class="b" style="left:18px;top:467px;width:1360px;height:30px;background:#f3f3f3;"></div>
<div class="t" style="left:26.5px;top:475.75px;font-size:14px;line-height:14px;color:#111;text-shadow:0.5px 0 0 rgba(0,0,0,0.3);letter-spacing:-0.628px;">Cellular</div>
<div class="t" style="left:166.5px;top:475.75px;font-size:14px;line-height:14px;color:#111;text-shadow:0.5px 0 0 rgba(0,0,0,0.3);letter-spacing:-0.802px;">Basingstoke</div>
<div class="t" style="left:346.5px;top:475.75px;font-size:14px;line-height:14px;color:#111;text-shadow:0.5px 0 0 rgba(0,0,0,0.3);letter-spacing:-0.155px;">-95</div>
<div class="t" style="left:426.5px;top:475.75px;font-size:14px;line-height:14px;color:#111;text-shadow:0.5px 0 0 rgba(0,0,0,0.3);letter-spacing:-0.183px;">-120</div>
<div class="t" style="left:506.5px;top:475.75px;font-size:14px;line-height:14px;color:#111;text-shadow:0.5px 0 0 rgba(0,0,0,0.3);letter-spacing:-0.155px;">-88</div>
<div class="t" style="left:586.5px;top:475.75px;font-size:14px;line-height:14px;color:#111;text-shadow:0.5px 0 0 rgba(0,0,0,0.3);letter-spacing:-0.728px;">98.05 %</div>
<div class="t" style="left:721.5px;top:475.75px;font-size:14px;line-height:14px;color:#111;text-shadow:0.5px 0 0 rgba(0,0,0,0.3);letter-spacing:-0.477px;">28</div>
<div class="t" style="left:791.5px;top:475.75px;font-size:14px;line-height:14px;color:#111;text-shadow:0.5px 0 0 rgba(0,0,0,0.3);letter-spacing:-0.238px;">0</div>
<div class="t" style="left:861.5px;top:475.75px;font-size:14px;line-height:14px;color:#111;text-shadow:0.5px 0 0 rgba(0,0,0,0.3);letter-spacing:-0.477px;">28</div>
<div class="t" style="left:931.5px;top:475.75px;font-size:14px;line-height:14px;color:#111;text-shadow:0.5px 0 0 rgba(0,0,0,0.3);letter-spacing:-0.385px;">14070518 | Unknown</div>
<div class="t" style="left:1081.5px;top:475.75px;font-size:14px;line-height:14px;color:#111;text-shadow:0.5px 0 0 rgba(0,0,0,0.3);letter-spacing:-0.692px;">3 UK</div>
<div class="t" style="left:1231.5px;top:475.75px;font-size:14px;line-height:14px;color:#111;text-shadow:0.5px 0 0 rgba(0,0,0,0.3);letter-spacing:-0.737px;">None | Wcdma</div>
<div class="b" style="left:18px;top:497px;width:1360px;height:30px;background:#ececec;"></div>
<div class="t" style="left:26.5px;top:505.75px;font-size:14px;line-height:14px;color:#111;text-shadow:0.5px 0 0 rgba(0,0,0,0.3);letter-spacing:-0.628px;">Cellular</div>
<div class="t" style="left:166.5px;top:505.75px;font-size:14px;line-height:14px;color:#111;text-shadow:0.5px 0 0 rgba(0,0,0,0.3);letter-spacing:-0.632px;">Home Woker</div>
<div class="t" style="left:346.5px;top:505.75px;font-size:14px;line-height:14px;color:#111;text-shadow:0.5px 0 0 rgba(0,0,0,0.3);letter-spacing:-0.155px;">-87</div>
<div class="t" style="left:426.5px;top:505.75px;font-size:14px;line-height:14px;color:#111;text-shadow:0.5px 0 0 rgba(0,0,0,0.3);letter-spacing:-0.183px;">-120</div>
<div class="t" style="left:506.5px;top:505.75px;font-size:14px;line-height:14px;color:#111;text-shadow:0.5px 0 0 rgba(0,0,0,0.3);letter-spacing:-0.155px;">-70</div>
<div class="t" style="left:586.5px;top:505.75px;font-size:14px;line-height:14px;color:#111;text-shadow:0.5px 0 0 rgba(0,0,0,0.3);letter-spacing:-0.728px;">85.12 %</div>
<div class="t" style="left:721.5px;top:505.75px;font-size:14px;line-height:14px;color:#111;text-shadow:0.5px 0 0 rgba(0,0,0,0.3);letter-spacing:-0.477px;">17</div>
<div class="t" style="left:791.5px;top:505.75px;font-size:14px;line-height:14px;color:#111;text-shadow:0.5px 0 0 rgba(0,0,0,0.3);letter-spacing:-0.238px;">2</div>
<div class="t" style="left:861.5px;top:505.75px;font-size:14px;line-height:14px;color:#111;text-shadow:0.5px 0 0 rgba(0,0,0,0.3);letter-spacing:-0.238px;">2</div>
<div class="t" style="left:931.5px;top:505.75px;font-size:14px;line-height:14px;color:#111;text-shadow:0.5px 0 0 rgba(0,0,0,0.3);letter-spacing:-0.394px;">6938880 | 6938882 |...</div>
<div class="t" style="left:1081.5px;top:505.75px;font-size:14px;line-height:14px;color:#111;text-shadow:0.5px 0 0 rgba(0,0,0,0.3);letter-spacing:-0.756px;">EE | Unknown</div>
<div class="t" style="left:1231.5px;top:505.75px;font-size:14px;line-height:14px;color:#111;text-shadow:0.5px 0 0 rgba(0,0,0,0.3);letter-spacing:-0.543px;">Lte | Unknown</div>
<div class="b" style="left:18px;top:527px;width:1360px;height:30px;background:#f3f3f3;"></div>
<div class="t" style="left:26.5px;top:535.75px;font-size:14px;line-height:14px;color:#111;text-shadow:0.5px 0 0 rgba(0,0,0,0.3);letter-spacing:-0.628px;">Cellular</div>
<div class="t" style="left:166.5px;top:535.75px;font-size:14px;line-height:14px;color:#111;text-shadow:0.5px 0 0 rgba(0,0,0,0.3);letter-spacing:-0.454px;">Nottingham</div>
<div class="t" style="left:346.5px;top:535.75px;font-size:14px;line-height:14px;color:#111;text-shadow:0.5px 0 0 rgba(0,0,0,0.3);letter-spacing:-0.183px;">-100</div>
<div class="t" style="left:426.5px;top:535.75px;font-size:14px;line-height:14px;color:#111;text-shadow:0.5px 0 0 rgba(0,0,0,0.3);letter-spacing:-0.183px;">-120</div>
<div class="t" style="left:506.5px;top:535.75px;font-size:14px;line-height:14px;color:#111;text-shadow:0.5px 0 0 rgba(0,0,0,0.3);letter-spacing:-0.155px;">-85</div>
<div class="t" style="left:586.5px;top:535.75px;font-size:14px;line-height:14px;color:#111;text-shadow:0.5px 0 0 rgba(0,0,0,0.3);letter-spacing:-0.728px;">31.76 %</div>
<div class="t" style="left:721.5px;top:535.75px;font-size:14px;line-height:14px;color:#111;text-shadow:0.5px 0 0 rgba(0,0,0,0.3);letter-spacing:-0.477px;">14</div>
<div class="t" style="left:791.5px;top:535.75px;font-size:14px;line-height:14px;color:#111;text-shadow:0.5px 0 0 rgba(0,0,0,0.3);letter-spacing:-0.238px;">2</div>
<div class="t" style="left:861.5px;top:535.75px;font-size:14px;line-height:14px;color:#111;text-shadow:0.5px 0 0 rgba(0,0,0,0.3);letter-spacing:-0.238px;">4</div>
<div class="t" style="left:931.5px;top:535.75px;font-size:14px;line-height:14px;color:#111;text-shadow:0.5px 0 0 rgba(0,0,0,0.3);letter-spacing:-0.378px;">12875264 | 1287526...</div>
<div class="t" style="left:1081.5px;top:535.75px;font-size:14px;line-height:14px;color:#111;text-shadow:0.5px 0 0 rgba(0,0,0,0.3);letter-spacing:-0.475px;">O2 - UK | Unknown</div>
<div class="t" style="left:1231.5px;top:535.75px;font-size:14px;line-height:14px;color:#111;text-shadow:0.5px 0 0 rgba(0,0,0,0.3);letter-spacing:-0.628px;">Lte | None</div>
<div class="b" style="left:18px;top:557px;width:1360px;height:30px;background:#ececec;"></div>
<div class="t" style="left:26.5px;top:565.75px;font-size:14px;line-height:14px;color:#111;text-shadow:0.5px 0 0 rgba(0,0,0,0.3);letter-spacing:-0.628px;">Cellular</div>
<div class="t" style="left:166.5px;top:565.75px;font-size:14px;line-height:14px;color:#111;text-shadow:0.5px 0 0 rgba(0,0,0,0.3);letter-spacing:-0.803px;">872 Naas Regional</div>
<div class="t" style="left:346.5px;top:565.75px;font-size:14px;line-height:14px;color:#111;text-shadow:0.5px 0 0 rgba(0,0,0,0.3);letter-spacing:-0.155px;">-61</div>
<div class="t" style="left:426.5px;top:565.75px;font-size:14px;line-height:14px;color:#111;text-shadow:0.5px 0 0 rgba(0,0,0,0.3);letter-spacing:-0.183px;">-120</div>
<div class="t" style="left:506.5px;top:565.75px;font-size:14px;line-height:14px;color:#111;text-shadow:0.5px 0 0 rgba(0,0,0,0.3);letter-spacing:-0.155px;">-52</div>
<div class="t" style="left:586.5px;top:565.75px;font-size:14px;line-height:14px;color:#111;text-shadow:0.5px 0 0 rgba(0,0,0,0.3);letter-spacing:-0.728px;">99.94 %</div>
<div class="t" style="left:721.5px;top:565.75px;font-size:14px;line-height:14px;color:#111;text-shadow:0.5px 0 0 rgba(0,0,0,0.3);letter-spacing:-0.238px;">4</div>
<div class="t" style="left:791.5px;top:565.75px;font-size:14px;line-height:14px;color:#111;text-shadow:0.5px 0 0 rgba(0,0,0,0.3);letter-spacing:-0.238px;">0</div>
<div class="t" style="left:861.5px;top:565.75px;font-size:14px;line-height:14px;color:#111;text-shadow:0.5px 0 0 rgba(0,0,0,0.3);letter-spacing:-0.238px;">0</div>
<div class="t" style="left:931.5px;top:565.75px;font-size:14px;line-height:14px;color:#111;text-shadow:0.5px 0 0 rgba(0,0,0,0.3);letter-spacing:-0.296px;">43708929 | 43708989</div>
<div class="t" style="left:1081.5px;top:565.75px;font-size:14px;line-height:14px;color:#111;text-shadow:0.5px 0 0 rgba(0,0,0,0.3);letter-spacing:-0.894px;">voda IE</div>
<div class="t" style="left:1231.5px;top:565.75px;font-size:14px;line-height:14px;color:#111;text-shadow:0.5px 0 0 rgba(0,0,0,0.3);letter-spacing:-0.941px;">Lte</div>
<div class="b" style="left:18px;top:587px;width:1360px;height:30px;background:#f3f3f3;"></div>
<div class="t" style="left:26.5px;top:595.75px;font-size:14px;line-height:14px;color:#111;text-shadow:0.5px 0 0 rgba(0,0,0,0.3);letter-spacing:-0.628px;">Cellular</div>
<div class="t" style="left:166.5px;top:595.75px;font-size:14px;line-height:14px;color:#111;text-shadow:0.5px 0 0 rgba(0,0,0,0.3);letter-spacing:-0.648px;">Finchley</div>
<div class="t" style="left:346.5px;top:595.75px;font-size:14px;line-height:14px;color:#111;text-shadow:0.5px 0 0 rgba(0,0,0,0.3);letter-spacing:0.163px;">-110</div>
<div class="t" style="left:426.5px;top:595.75px;font-size:14px;line-height:14px;color:#111;text-shadow:0.5px 0 0 rgba(0,0,0,0.3);letter-spacing:-0.183px;">-120</div>
<div class="t" style="left:506.5px;top:595.75px;font-size:14px;line-height:14px;color:#111;text-shadow:0.5px 0 0 rgba(0,0,0,0.3);letter-spacing:0.163px;">-110</div>
<div class="t" style="left:586.5px;top:595.75px;font-size:14px;line-height:14px;color:#111;text-shadow:0.5px 0 0 rgba(0,0,0,0.3);letter-spacing:-0.826px;">0.00 %</div>
<div class="t" style="left:721.5px;top:595.75px;font-size:14px;line-height:14px;color:#111;text-shadow:0.5px 0 0 rgba(0,0,0,0.3);letter-spacing:-0.238px;">0</div>
<div class="t" style="left:791.5px;top:595.75px;font-size:14px;line-height:14px;color:#111;text-shadow:0.5px 0 0 rgba(0,0,0,0.3);letter-spacing:-0.238px;">0</div>
<div class="t" style="left:861.5px;top:595.75px;font-size:14px;line-height:14px;color:#111;text-shadow:0.5px 0 0 rgba(0,0,0,0.3);letter-spacing:-0.238px;">0</div>
<div class="t" style="left:931.5px;top:595.75px;font-size:14px;line-height:14px;color:#111;text-shadow:0.5px 0 0 rgba(0,0,0,0.3);letter-spacing:-0.268px;">128551278</div>
<div class="t" style="left:1081.5px;top:595.75px;font-size:14px;line-height:14px;color:#111;text-shadow:0.5px 0 0 rgba(0,0,0,0.3);letter-spacing:-0.521px;">Unknown</div>
<div class="t" style="left:1231.5px;top:595.75px;font-size:14px;line-height:14px;color:#111;text-shadow:0.5px 0 0 rgba(0,0,0,0.3);letter-spacing:-0.941px;">Lte</div>
<div class="b" style="left:18px;top:617px;width:1360px;height:30px;background:#ececec;"></div>
<div class="t" style="left:26.5px;top:625.75px;font-size:14px;line-height:14px;color:#111;text-shadow:0.5px 0 0 rgba(0,0,0,0.3);letter-spacing:-0.628px;">Cellular</div>
<div class="t" style="left:166.5px;top:625.75px;font-size:14px;line-height:14px;color:#111;text-shadow:0.5px 0 0 rgba(0,0,0,0.3);letter-spacing:-0.563px;">DKLocation</div>
<div class="t" style="left:346.5px;top:625.75px;font-size:14px;line-height:14px;color:#111;text-shadow:0.5px 0 0 rgba(0,0,0,0.3);letter-spacing:-0.183px;">-120</div>
<div class="t" style="left:426.5px;top:625.75px;font-size:14px;line-height:14px;color:#111;text-shadow:0.5px 0 0 rgba(0,0,0,0.3);letter-spacing:-0.183px;">-120</div>
<div class="t" style="left:506.5px;top:625.75px;font-size:14px;line-height:14px;color:#111;text-shadow:0.5px 0 0 rgba(0,0,0,0.3);letter-spacing:-0.183px;">-120</div>
<div class="t" style="left:586.5px;top:625.75px;font-size:14px;line-height:14px;color:#111;text-shadow:0.5px 0 0 rgba(0,0,0,0.3);letter-spacing:-0.658px;">100.00 %</div>
<div class="t" style="left:721.5px;top:625.75px;font-size:14px;line-height:14px;color:#111;text-shadow:0.5px 0 0 rgba(0,0,0,0.3);letter-spacing:-0.238px;">0</div>
<div class="t" style="left:791.5px;top:625.75px;font-size:14px;line-height:14px;color:#111;text-shadow:0.5px 0 0 rgba(0,0,0,0.3);letter-spacing:-0.238px;">0</div>
<div class="t" style="left:861.5px;top:625.75px;font-size:14px;line-height:14px;color:#111;text-shadow:0.5px 0 0 rgba(0,0,0,0.3);letter-spacing:-0.238px;">0</div>
<div class="t" style="left:931.5px;top:625.75px;font-size:14px;line-height:14px;color:#111;text-shadow:0.5px 0 0 rgba(0,0,0,0.3);letter-spacing:-0.521px;">Unknown</div>
<div class="t" style="left:1081.5px;top:625.75px;font-size:14px;line-height:14px;color:#111;text-shadow:0.5px 0 0 rgba(0,0,0,0.3);letter-spacing:-0.521px;">Unknown</div>
<div class="t" style="left:1231.5px;top:625.75px;font-size:14px;line-height:14px;color:#111;text-shadow:0.5px 0 0 rgba(0,0,0,0.3);letter-spacing:-0.521px;">Unknown</div>
<div class="b" style="left:18px;top:647px;width:1360px;height:30px;background:#f3f3f3;"></div>
<div class="t" style="left:26.5px;top:655.75px;font-size:14px;line-height:14px;color:#111;text-shadow:0.5px 0 0 rgba(0,0,0,0.3);letter-spacing:-0.628px;">Cellular</div>
<div class="t" style="left:166.5px;top:655.75px;font-size:14px;line-height:14px;color:#111;text-shadow:0.5px 0 0 rgba(0,0,0,0.3);letter-spacing:-0.563px;">DKLocation</div>
<div class="t" style="left:346.5px;top:655.75px;font-size:14px;line-height:14px;color:#111;text-shadow:0.5px 0 0 rgba(0,0,0,0.3);letter-spacing:-0.183px;">-120</div>
<div class="t" style="left:426.5px;top:655.75px;font-size:14px;line-height:14px;color:#111;text-shadow:0.5px 0 0 rgba(0,0,0,0.3);letter-spacing:-0.183px;">-120</div>
<div class="t" style="left:506.5px;top:655.75px;font-size:14px;line-height:14px;color:#111;text-shadow:0.5px 0 0 rgba(0,0,0,0.3);letter-spacing:-0.183px;">-120</div>
<div class="t" style="left:586.5px;top:655.75px;font-size:14px;line-height:14px;color:#111;text-shadow:0.5px 0 0 rgba(0,0,0,0.3);letter-spacing:-0.658px;">100.00 %</div>
<div class="t" style="left:721.5px;top:655.75px;font-size:14px;line-height:14px;color:#111;text-shadow:0.5px 0 0 rgba(0,0,0,0.3);letter-spacing:-0.238px;">0</div>
<div class="t" style="left:791.5px;top:655.75px;font-size:14px;line-height:14px;color:#111;text-shadow:0.5px 0 0 rgba(0,0,0,0.3);letter-spacing:-0.238px;">0</div>
<div class="t" style="left:861.5px;top:655.75px;font-size:14px;line-height:14px;color:#111;text-shadow:0.5px 0 0 rgba(0,0,0,0.3);letter-spacing:-0.238px;">0</div>
<div class="t" style="left:931.5px;top:655.75px;font-size:14px;line-height:14px;color:#111;text-shadow:0.5px 0 0 rgba(0,0,0,0.3);letter-spacing:-0.521px;">Unknown</div>
<div class="t" style="left:1081.5px;top:655.75px;font-size:14px;line-height:14px;color:#111;text-shadow:0.5px 0 0 rgba(0,0,0,0.3);letter-spacing:-0.521px;">Unknown</div>
<div class="t" style="left:1231.5px;top:655.75px;font-size:14px;line-height:14px;color:#111;text-shadow:0.5px 0 0 rgba(0,0,0,0.3);letter-spacing:-0.521px;">Unknown</div>
<div class="b" style="left:18px;top:677px;width:1360px;height:30px;background:#ececec;"></div>
<div class="t" style="left:26.5px;top:685.75px;font-size:14px;line-height:14px;color:#111;text-shadow:0.5px 0 0 rgba(0,0,0,0.3);letter-spacing:-0.628px;">Cellular</div>
<div class="t" style="left:166.5px;top:685.75px;font-size:14px;line-height:14px;color:#111;text-shadow:0.5px 0 0 rgba(0,0,0,0.3);letter-spacing:-1.122px;">Farnham</div>
<div class="t" style="left:346.5px;top:685.75px;font-size:14px;line-height:14px;color:#111;text-shadow:0.5px 0 0 rgba(0,0,0,0.3);letter-spacing:-0.155px;">-75</div>
<div class="t" style="left:426.5px;top:685.75px;font-size:14px;line-height:14px;color:#111;text-shadow:0.5px 0 0 rgba(0,0,0,0.3);letter-spacing:-0.183px;">-120</div>
<div class="t" style="left:506.5px;top:685.75px;font-size:14px;line-height:14px;color:#111;text-shadow:0.5px 0 0 rgba(0,0,0,0.3);letter-spacing:-0.155px;">-68</div>
<div class="t" style="left:586.5px;top:685.75px;font-size:14px;line-height:14px;color:#111;text-shadow:0.5px 0 0 rgba(0,0,0,0.3);letter-spacing:-0.728px;">99.94 %</div>
<div class="t" style="left:721.5px;top:685.75px;font-size:14px;line-height:14px;color:#111;text-shadow:0.5px 0 0 rgba(0,0,0,0.3);letter-spacing:-0.238px;">0</div>
<div class="t" style="left:791.5px;top:685.75px;font-size:14px;line-height:14px;color:#111;text-shadow:0.5px 0 0 rgba(0,0,0,0.3);letter-spacing:-0.238px;">0</div>
<div class="t" style="left:861.5px;top:685.75px;font-size:14px;line-height:14px;color:#111;text-shadow:0.5px 0 0 rgba(0,0,0,0.3);letter-spacing:-0.238px;">0</div>
<div class="t" style="left:931.5px;top:685.75px;font-size:14px;line-height:14px;color:#111;text-shadow:0.5px 0 0 rgba(0,0,0,0.3);letter-spacing:-0.286px;">898305</div>
<div class="t" style="left:1081.5px;top:685.75px;font-size:14px;line-height:14px;color:#111;text-shadow:0.5px 0 0 rgba(0,0,0,0.3);letter-spacing:-0.692px;">3 UK</div>
<div class="t" style="left:1231.5px;top:685.75px;font-size:14px;line-height:14px;color:#111;text-shadow:0.5px 0 0 rgba(0,0,0,0.3);letter-spacing:-0.941px;">Lte</div>
<div class="b" style="left:18px;top:707px;width:1360px;height:30px;background:#f3f3f3;"></div>
<div class="t" style="left:26.5px;top:715.75px;font-size:14px;line-height:14px;color:#111;text-shadow:0.5px 0 0 rgba(0,0,0,0.3);letter-spacing:-0.628px;">Cellular</div>
<div class="t" style="left:166.5px;top:715.75px;font-size:14px;line-height:14px;color:#111;text-shadow:0.5px 0 0 rgba(0,0,0,0.3);letter-spacing:-0.715px;">Chris Davis home</div>
<div class="t" style="left:346.5px;top:715.75px;font-size:14px;line-height:14px;color:#111;text-shadow:0.5px 0 0 rgba(0,0,0,0.3);letter-spacing:-0.183px;">-120</div>
<div class="t" style="left:426.5px;top:715.75px;font-size:14px;line-height:14px;color:#111;text-shadow:0.5px 0 0 rgba(0,0,0,0.3);letter-spacing:-0.183px;">-120</div>
<div class="t" style="left:506.5px;top:715.75px;font-size:14px;line-height:14px;color:#111;text-shadow:0.5px 0 0 rgba(0,0,0,0.3);letter-spacing:-0.183px;">-120</div>
<div class="t" style="left:586.5px;top:715.75px;font-size:14px;line-height:14px;color:#111;text-shadow:0.5px 0 0 rgba(0,0,0,0.3);letter-spacing:-0.658px;">100.00 %</div>
<div class="t" style="left:721.5px;top:715.75px;font-size:14px;line-height:14px;color:#111;text-shadow:0.5px 0 0 rgba(0,0,0,0.3);letter-spacing:-0.238px;">0</div>
<div class="t" style="left:791.5px;top:715.75px;font-size:14px;line-height:14px;color:#111;text-shadow:0.5px 0 0 rgba(0,0,0,0.3);letter-spacing:-0.238px;">0</div>
<div class="t" style="left:861.5px;top:715.75px;font-size:14px;line-height:14px;color:#111;text-shadow:0.5px 0 0 rgba(0,0,0,0.3);letter-spacing:-0.238px;">0</div>
<div class="t" style="left:931.5px;top:715.75px;font-size:14px;line-height:14px;color:#111;text-shadow:0.5px 0 0 rgba(0,0,0,0.3);letter-spacing:-0.521px;">Unknown</div>
<div class="t" style="left:1081.5px;top:715.75px;font-size:14px;line-height:14px;color:#111;text-shadow:0.5px 0 0 rgba(0,0,0,0.3);letter-spacing:-0.521px;">Unknown</div>
<div class="t" style="left:1231.5px;top:715.75px;font-size:14px;line-height:14px;color:#111;text-shadow:0.5px 0 0 rgba(0,0,0,0.3);letter-spacing:-0.521px;">Unknown</div>
<div class="b" style="left:18px;top:737px;width:1360px;height:30px;background:#ebebeb;"></div>
<div class="t" style="left:426.5px;top:745.83px;font-size:13.2px;line-height:13.2px;color:#111;font-weight:700;letter-spacing:0.356px;">-120</div>
<div class="t" style="left:506.5px;top:745.83px;font-size:13.2px;line-height:13.2px;color:#111;font-weight:700;letter-spacing:0.431px;">-47</div>
<div class="t" style="left:586.5px;top:745.83px;font-size:13.2px;line-height:13.2px;color:#111;font-weight:700;letter-spacing:-0.223px;">78.06 %</div>
<div class="t" style="left:721.5px;top:745.83px;font-size:13.2px;line-height:13.2px;color:#111;font-weight:700;letter-spacing:0.275px;">2770</div>
<div class="t" style="left:791.5px;top:745.83px;font-size:13.2px;line-height:13.2px;color:#111;font-weight:700;letter-spacing:0.275px;">1080</div>
<div class="t" style="left:861.5px;top:746.83px;font-size:13.2px;line-height:13.2px;color:#111;font-weight:700;letter-spacing:0.518px;">1101</div>
<div class="b" style="left:157px;top:317px;width:1px;height:445px;background:#fcfcfc;"></div>
<div class="b" style="left:337px;top:317px;width:1px;height:445px;background:#fcfcfc;"></div>
<div class="b" style="left:417px;top:317px;width:1px;height:445px;background:#fcfcfc;"></div>
<div class="b" style="left:497px;top:317px;width:1px;height:449px;background:#fcfcfc;"></div>
<div class="b" style="left:577px;top:317px;width:1px;height:449px;background:#fcfcfc;"></div>
<div class="b" style="left:712px;top:317px;width:1px;height:449px;background:#fcfcfc;"></div>
<div class="b" style="left:782px;top:317px;width:1px;height:449px;background:#fcfcfc;"></div>
<div class="b" style="left:852px;top:317px;width:1px;height:449px;background:#fcfcfc;"></div>
<div class="b" style="left:922px;top:317px;width:1px;height:449px;background:#fcfcfc;"></div>
<div class="b" style="left:1072px;top:317px;width:1px;height:445px;background:#fcfcfc;"></div>
<div class="b" style="left:1222px;top:317px;width:1px;height:445px;background:#fcfcfc;"></div>
<div class="b" style="left:1372px;top:317px;width:1px;height:445px;background:#fcfcfc;"></div>
<div class="b" style="left:853px;top:737px;width:69px;height:1px;background:#fcfcfc;"></div>
<div class="b" style="left:1223px;top:737px;width:149px;height:1px;background:#fcfcfc;"></div>
<svg class="b" style="left:18px;top:416px" width="5" height="12" viewBox="0 0 5 12"><path d="M0 0 L5 6 L0 12 Z" fill="#44525c"/></svg>
<svg class="b" style="left:1381.5px;top:756.5px" width="10" height="7" viewBox="0 0 10 7"><path d="M1 1 L5 5.5 L9 1" fill="none" stroke="#555" stroke-width="2"/></svg>
<svg class="b" style="left:1381.5px;top:321.5px" width="10" height="7" viewBox="0 0 10 7"><path d="M1 6 L5 1.5 L9 6" fill="none" stroke="#555" stroke-width="2"/></svg>
<div class="b" style="left:18px;top:767px;width:1360px;height:1px;background:#fafafa;"></div>
<div class="b" style="left:18px;top:768px;width:1355px;height:17px;background:#f0f0f0;"></div>
<div class="b" style="left:35px;top:768px;width:1105px;height:17px;background:#cbcbcb;"></div>
<svg class="b" style="left:21.5px;top:771px" width="9" height="11" viewBox="0 0 9 11"><path d="M7.3 1.4 L2 5.5 L7.3 9.6" fill="none" stroke="#555" stroke-width="2.1"/></svg>
<svg class="b" style="left:1366px;top:771px" width="9" height="11" viewBox="0 0 9 11"><path d="M1.3 1.4 L6.6 5.5 L1.3 9.6" fill="none" stroke="#555" stroke-width="2.1"/></svg>
<div class="b" style="left:937px;top:447px;width:480px;height:37.5px;background:#f9f9f9;border:1px solid #dcdcdc;box-shadow:1px 1px 2px rgba(0,0,0,0.12)"></div>
<div class="t" style="left:943.5px;top:452.87px;font-size:11.5px;line-height:11.5px;color:#111;text-shadow:0.5px 0 0 rgba(0,0,0,0.3);letter-spacing:-0.32px;">10816352 | 10824933 | 10837626 | 10864825 | 10865033 | 10865116 | 2568193 | 2777345 |</div>
<div class="t" style="left:943.5px;top:468.87px;font-size:11.5px;line-height:11.5px;color:#111;text-shadow:0.5px 0 0 rgba(0,0,0,0.3);">Unknown</div>
<svg class="b" style="left:929px;top:425px" width="20" height="26" viewBox="0 0 20 26">
<path d="M6.2 2.3 a1.6 1.6 0 0 1 3.2 0 V10 a1.5 1.5 0 0 1 3 0 V11 a1.5 1.5 0 0 1 3 0.3 V12 a1.5 1.5 0 0 1 3 0.5 V18 C18.4 22 16 24.5 12 24.5 H10.5 C8 24.5 6.5 23 5 21 L1.5 16 a1.6 1.6 0 0 1 2.5 -2 L6.2 16 Z" fill="#fff" stroke="#222" stroke-width="1.2" stroke-linejoin="round"/>
<path d="M9.4 10 V15.5 M12.4 11 V15.5 M15.4 12 V15.5" stroke="#222" stroke-width="0.9"/>
</svg>
</body></html>
